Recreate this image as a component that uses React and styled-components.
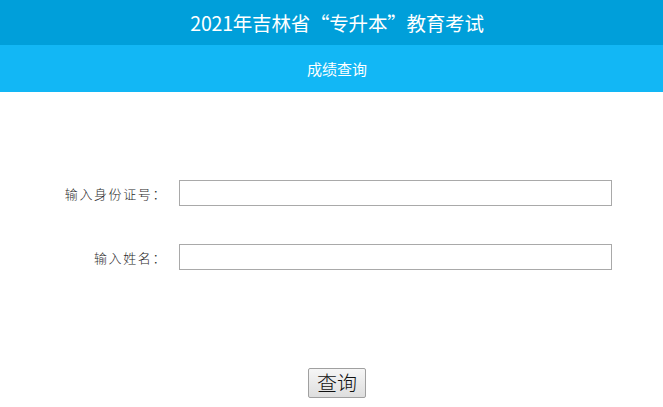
import React from 'react'
import styled, { createGlobalStyle } from 'styled-components'

const GlobalStyle = createGlobalStyle`
  html, body {
    margin: 0;
    padding: 0;
    background: #fff;
  }
  body {
    font-family: "Noto Sans CJK SC", "Microsoft YaHei", sans-serif;
  }
`;

const Page = styled.div`
  padding-left: 11px;
`;

const TitleBar = styled.div`
  height: 45px;
  margin-left: -11px;
  padding-left: 11px;
  background: #009fda;
  color: #fff;
  font-size: 19.5px;
  letter-spacing: -0.2px;
  display: flex;
  align-items: center;
  justify-content: center;
`;

const SubBar = styled.div`
  height: 47px;
  margin-left: -11px;
  padding-left: 11px;
  background: #12b7f5;
  color: #fff;
  font-size: 15px;
  display: flex;
  align-items: center;
  justify-content: center;
`;

const Form = styled.form`
  display: flex;
  flex-direction: column;
  gap: 38px;
  padding-top: 88px;
`;

const Row = styled.div`
  display: flex;
  align-items: center;
`;

const Label = styled.label`
  width: 156px;
  margin-right: 12px;
  text-align: right;
  font-size: 13px;
  letter-spacing: 1.6px;
  color: #2a2a2a;
  font-weight: 300;
`;

const Input = styled.input`
  box-sizing: border-box;
  width: 433px;
  height: 26px;
  border: 1px solid #a9a9a9;
  outline: none;
  padding: 0 4px;
  margin: 0;
`;

const Actions = styled.div`
  display: flex;
  justify-content: center;
  padding-top: 98px;
`;

const Button = styled.button`
  box-sizing: border-box;
  width: 58px;
  height: 30px;
  font-family: "Noto Sans CJK SC", sans-serif;
  font-size: 20px;
  line-height: 1;
  color: #111;
  background: linear-gradient(#f6f6f6, #dedede);
  border: 1px solid #a0a0a0;
  border-radius: 2px;
  padding: 0;
  font-weight: 300;
`;

export default function App() {
  return (
    <>
      <GlobalStyle />
      <Page>
        <TitleBar>2021年吉林省“专升本”教育考试</TitleBar>
        <SubBar>成绩查询</SubBar>
        <Form onSubmit={e => e.preventDefault()}>
          <Row>
            <Label htmlFor="idcard">输入身份证号：</Label>
            <Input id="idcard" type="text" />
          </Row>
          <Row>
            <Label htmlFor="name">输入姓名：</Label>
            <Input id="name" type="text" />
          </Row>
        </Form>
        <Actions>
          <Button type="button">查询</Button>
        </Actions>
      </Page>
    </>
  );
}
